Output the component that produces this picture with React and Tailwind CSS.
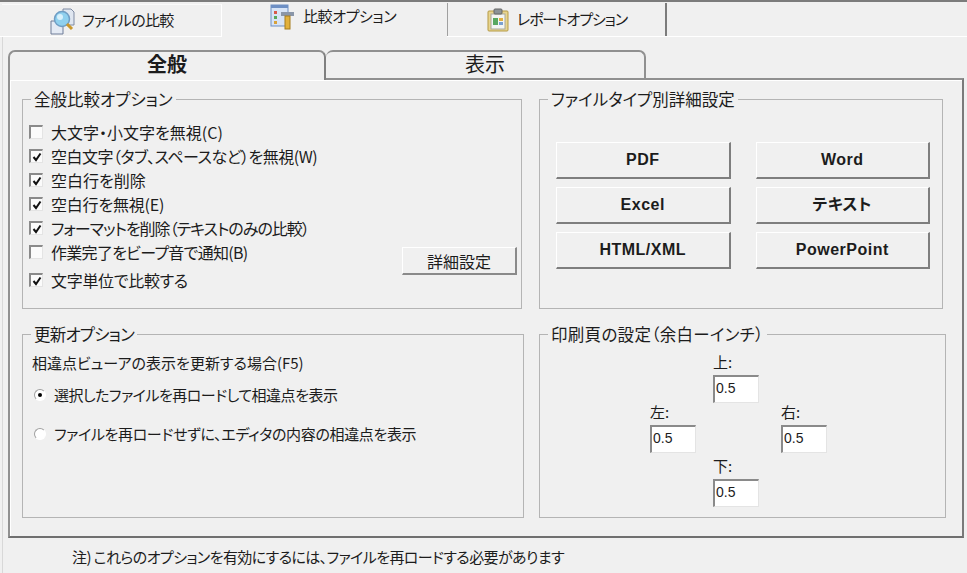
function CompareIcon() {
  return (
    <svg width="28" height="30" viewBox="0 0 28 30" className="shrink-0">
      <path d="M14 3h8l3 3v13H14z" fill="#dfe6f0" stroke="#7f8ba3" />
      <path d="M2 15h9l3 3v10H2z" fill="#e4eaf4" stroke="#6f7d98" />
      <circle cx="13" cy="13" r="7.5" fill="#8fd0ee" stroke="#6f9dc4" strokeWidth="1.5" />
      <circle cx="11" cy="11" r="3" fill="#d8f0fb" />
      <path d="M18 18l5 5" stroke="#c9982b" strokeWidth="3" />
    </svg>
  );
}

function OptionIcon() {
  return (
    <svg width="26" height="26" viewBox="0 0 26 26" className="shrink-0">
      <rect x="1" y="1" width="17" height="21" fill="#d7e4f6" stroke="#6d8fc4" />
      <rect x="1" y="1" width="17" height="3" fill="#6d8fc4" />
      <rect x="4" y="7" width="3" height="3" fill="#d85a4a" />
      <rect x="4" y="12" width="3" height="3" fill="#5aa85a" />
      <rect x="4" y="17" width="3" height="3" fill="#d8a23a" />
      <path d="M11 8h13v4H11z" fill="#8a96a8" />
      <rect x="15" y="12" width="5" height="13" fill="#e2b13c" stroke="#a57c1c" />
    </svg>
  );
}

function ReportIcon() {
  return (
    <svg width="22" height="24" viewBox="0 0 22 24" className="shrink-0">
      <rect x="1" y="3" width="20" height="20" rx="1" fill="#e8d58f" stroke="#b59a45" />
      <rect x="4" y="6" width="14" height="15" fill="#f3f5f2" stroke="#a8a89c" />
      <rect x="7" y="1" width="8" height="5" rx="1" fill="#8c9396" stroke="#666" />
      <rect x="6" y="10" width="5" height="7" fill="#58a860" />
      <rect x="12" y="10" width="4" height="3" fill="#e0b040" />
      <rect x="12" y="14" width="4" height="3" fill="#7aa0d0" />
    </svg>
  );
}

function Group({ title, titleClass, className, children }) {
  return (
    <fieldset className={`border border-[#b4b4b4] min-w-0 ${className}`}>
      <legend className={`ml-[8px] px-[3px] text-[16.5px] leading-[18px] ${titleClass || ""}`}>{title}</legend>
      {children}
    </fieldset>
  );
}

function Check({ label, checked, className, textClass }) {
  return (
    <div className={`flex items-center gap-[8px] h-[24px] ${className || ""}`}>
      <span className="w-[14px] h-[14px] bg-[#fbfbfb] border-l-2 border-t-2 border-[#8a8a8a] border-r border-b border-r-[#e4e4e4] border-b-[#e4e4e4] flex items-center justify-center shrink-0">
        {checked && (
          <svg width="10" height="10" viewBox="0 0 10 10">
            <path d="M1.5 5l2.5 3 4.5-6.5" fill="none" stroke="#111" strokeWidth="2" />
          </svg>
        )}
      </span>
      <span className={`text-[16px] whitespace-nowrap ${textClass || ""}`}>{label}</span>
    </div>
  );
}

function Radio({ label, checked, className }) {
  return (
    <div className={`flex items-center gap-[8px] ${className}`}>
      <span className="w-[12px] h-[12px] rounded-full bg-white border border-[#a0a0a0] border-r-white border-b-white flex items-center justify-center shrink-0">
        {checked && <span className="w-[4px] h-[4px] rounded-full bg-black" />}
      </span>
      <span className="text-[15px] whitespace-nowrap">{label}</span>
    </div>
  );
}

function TypeButton({ children }) {
  return (
    <button className="h-[37px] bg-[#f0f0f0] border border-t-white border-l-white border-r-2 border-b-2 border-r-[#7e7e7e] border-b-[#7e7e7e] text-[16px] tracking-[0.5px] font-bold [font-family:'Liberation_Sans','Noto_Sans_CJK_JP',sans-serif]">
      {children}
    </button>
  );
}

function Margin({ label, className }) {
  return (
    <div className={className}>
      <div className="text-[15px] leading-[20px] h-[23px]">{label}</div>
      <input
        readOnly
        value="0.5"
        className="block w-[46px] h-[28px] bg-white pl-[1px] pb-[4px] text-[14px] border-2 border-r border-b border-t-[#8a8a8a] border-l-[#8a8a8a] border-r-[#e4e4e4] border-b-[#e4e4e4] outline-none [font-family:'Liberation_Sans',sans-serif]"
      />
    </div>
  );
}

export default function App() {
  return (
    <div className="w-[967px] h-[573px] overflow-hidden bg-[#f0f0f0] text-[#1c1c1c] border-t-2 border-[#7c7c7c] [font-family:'Noto_Sans_CJK_JP',sans-serif] [font-feature-settings:'palt']">
      <div className="flex items-end h-[35px] pl-[2px] border-b border-white">
        <div className="w-[220px] h-[32px] flex items-center gap-[5px] pl-[47px] border-t border-[#fafafa] border-r border-r-white text-[15px] tracking-[-0.7px]">
          <CompareIcon />
          <span>ファイルの比較</span>
        </div>
        <div className="w-[225px] h-[35px] flex items-center gap-[7px] pl-[48px] pb-[6px] text-[15px] tracking-[-0.4px] -mb-px bg-[#f0f0f0]">
          <OptionIcon />
          <span>比較オプション</span>
        </div>
        <div className="w-[220px] h-[33px] flex items-center gap-[8px] pl-[39px] border-l border-r-2 border-l-[#a0a0a0] border-r-[#7c7c7c] text-[15px] tracking-[-1.1px]">
          <ReportIcon />
          <span>レポートオプション</span>
        </div>
      </div>

      <div className="ml-[2px] border-l border-[#d8d8d8] pl-[5px] pr-[3px] pt-[13px] h-[536px]">
        <div className="flex h-[28px]">
          <div className="w-[318px] h-[30px] z-10 bg-[#f0f0f0] border-2 border-b-0 border-[#909090] border-r-[#808080] rounded-t-[7px] text-center text-[20px] font-bold leading-[23px]">
            全般
          </div>
          <div className="w-[320px] h-[28px] bg-[#f0f0f0] border-t-2 border-r-2 border-[#909090] rounded-t-[7px] text-center text-[20px] leading-[24px]">
            表示
          </div>
        </div>
        <div className="h-[460px] border-2 border-[#909090] border-b-[#6f6f6f] border-r-[#7a7a7a] pl-[12px] pt-[10px] shadow-[inset_1px_1px_0_#ffffff]">
          <div className="grid grid-cols-[500px_404px] gap-x-[17px]">
            <Group title="全般比較オプション" className="h-[219px]">
              <div className="flex pl-[6px] pr-[4px] pt-[12px]">
                <div>
                  <Check label="大文字・小文字を無視(C)" />
                  <Check label="空白文字（タブ、スペースなど）を無視(W)" checked textClass="tracking-[-0.5px]" />
                  <Check label="空白行を削除" checked />
                  <Check label="空白行を無視(E)" checked textClass="tracking-[-0.2px]" />
                  <Check label="フォーマットを削除（テキストのみの比較）" checked textClass="tracking-[-1px]" />
                  <Check label="作業完了をビープ音で通知(B)" textClass="tracking-[-0.7px]" />
                  <Check label="文字単位で比較する" checked className="mt-[4px]" textClass="tracking-[-0.3px]" />
                </div>
                <button className="ml-auto mt-[127px] self-start w-[115px] h-[28px] border border-t-white border-l-white border-r-2 border-b-2 border-r-[#8a8a8a] border-b-[#8a8a8a] text-[16px]">
                  詳細設定
                </button>
              </div>
            </Group>
            <Group title="ファイルタイプ別詳細設定" className="h-[219px]">
              <div className="grid grid-cols-2 gap-x-[25px] gap-y-[8px] pl-[16px] pr-[12px] pt-[34px]">
                <TypeButton>PDF</TypeButton>
                <TypeButton>Word</TypeButton>
                <TypeButton>Excel</TypeButton>
                <TypeButton>テキスト</TypeButton>
                <TypeButton>HTML/XML</TypeButton>
                <TypeButton>PowerPoint</TypeButton>
              </div>
            </Group>
          </div>
          <div className="grid grid-cols-[502px_407px] gap-x-[15px] mt-[16px]">
            <Group title="更新オプション" titleClass="tracking-[-0.8px]" className="h-[193px]">
              <div className="pl-[9px] pt-[9px]">
                <div className="text-[15px] leading-[22px]">相違点ビューアの表示を更新する場合(F5)</div>
                <Radio label="選択したファイルを再ロードして相違点を表示" checked className="ml-[2px] mt-[9px] h-[24px] tracking-[-0.5px]" />
                <Radio label="ファイルを再ロードせずに、エディタの内容の相違点を表示" className="ml-[2px] mt-[15px] h-[24px] tracking-[-0.35px]" />
              </div>
            </Group>
            <Group title="印刷頁の設定（余白ーインチ）" titleClass="tracking-[0.3px]" className="h-[193px]">
              <div className="pl-[110px] pt-[9px] grid grid-cols-[63px_68px_46px] grid-rows-[50px_54px_51px]">
                <Margin label="上:" className="col-start-2 row-start-1" />
                <Margin label="左:" className="col-start-1 row-start-2" />
                <Margin label="右:" className="col-start-3 row-start-2" />
                <Margin label="下:" className="col-start-2 row-start-3" />
              </div>
            </Group>
          </div>
        </div>
        <div className="pl-[64px] pt-[8px] text-[15px] leading-[22px] tracking-[-0.6px]">
          注) これらのオプションを有効にするには、ファイルを再ロードする必要があります
        </div>
      </div>
    </div>
  );
}
